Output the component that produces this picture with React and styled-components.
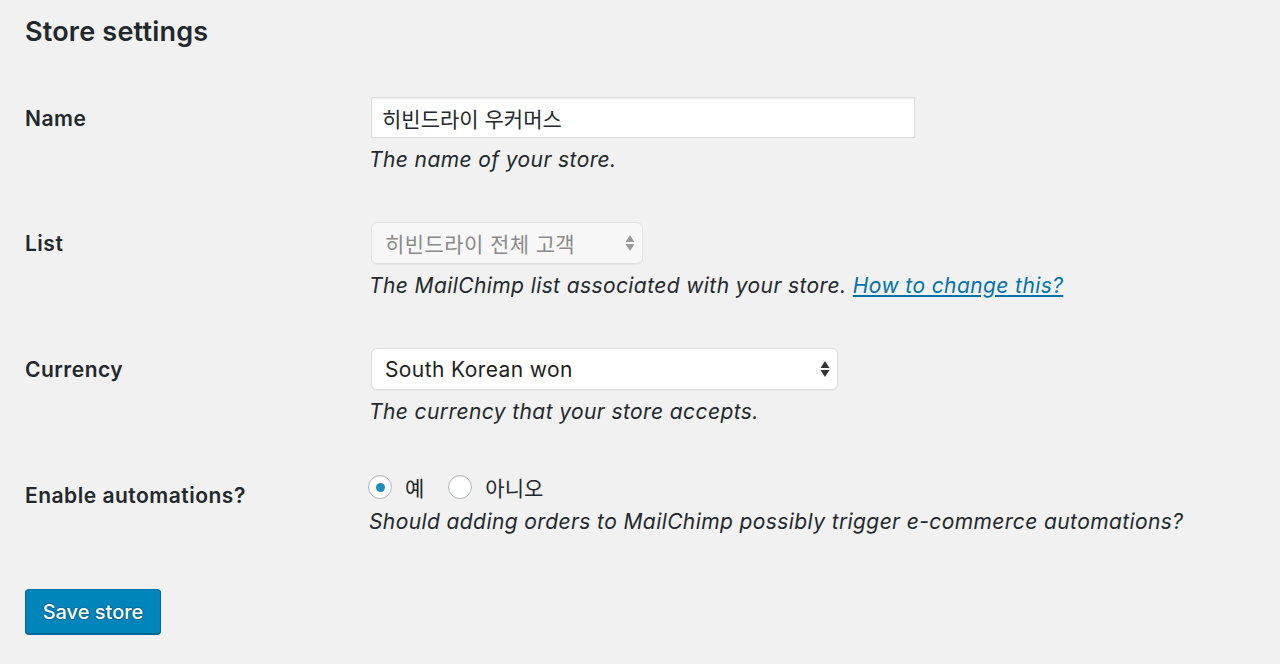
import React from "react";
import styled, { createGlobalStyle } from "styled-components";

const Global = createGlobalStyle`
  html, body { margin: 0; padding: 0; background: #f1f1f1; }
  body {
    font-family: Inter, "Noto Sans CJK KR", "Noto Sans", sans-serif;
    color: #23282d;
    font-size: 21px;
  }
`;

const Page = styled.div`
  padding: 0 25px;
  min-height: 664px;
  box-sizing: border-box;
`;

const Heading = styled.h2`
  margin: 0;
  padding-top: 15px;
  font-size: 27px;
  letter-spacing: 0.2px;
  line-height: 34px;
  font-weight: 600;
  color: #23282d;
`;

const Form = styled.div`
  margin-top: 26px;
`;

const Row = styled.div`
  display: grid;
  grid-template-columns: 346px 1fr;
  padding: 22px 0 25px;
`;

const Label = styled.div`
  padding-top: 9px;
  line-height: 26px;
  font-size: 21px;
  letter-spacing: 0.5px;
  font-weight: 600;
  color: #23282d;
`;

const Field = styled.div`
  display: flex;
  flex-direction: column;
  align-items: flex-start;
`;

const TextInput = styled.div`
  box-sizing: border-box;
  width: 544px;
  height: 41px;
  background: #fff;
  border: 1px solid #ddd;
  box-shadow: inset 0 1px 2px rgba(0, 0, 0, 0.07);
  padding: 0 10px;
  display: flex;
  align-items: center;
  font-size: 21px;
  color: #23282d;
`;

const Select = styled.div`
  box-sizing: border-box;
  width: ${(p) => p.$w}px;
  height: 42px;
  background: ${(p) => (p.$disabled ? "#f7f7f7" : "#fff")};
  border: 1px solid ${(p) => (p.$disabled ? "#e2e2e2" : "#dcdcdc")};
  border-radius: 6px;
  box-shadow: 0 1px 1px rgba(0, 0, 0, 0.04);
  padding: 0 7px 0 13px;
  display: flex;
  align-items: center;
  justify-content: space-between;
  font-size: 21px;
  letter-spacing: 0.4px;
  color: ${(p) => (p.$disabled ? "#8a8a8a" : "#1e1e1e")};
`;

const Arrows = ({ color }) => (
  <svg width="10" height="20" viewBox="0 0 10 20">
    <polygon points="5,2 9.5,9 0.5,9" fill={color} />
    <polygon points="5,18 9.5,11 0.5,11" fill={color} />
  </svg>
);

const Desc = styled.div`
  margin-top: 7px;
  margin-left: -2px;
  line-height: 30px;
  font-size: 21px;
  letter-spacing: 0.4px;
  font-style: italic;
  color: #23282d;
`;

const Link = styled.a`
  color: #0073aa;
  text-decoration: underline;
  cursor: pointer;
`;

const RadioGroup = styled.div`
  display: flex;
  align-items: center;
  height: 26px;
  margin-left: -3px;
`;

const RadioItem = styled.label`
  display: flex;
  align-items: center;
  gap: 13px;
  margin-right: 24px;
  font-size: 21px;
  color: #23282d;
`;

const RadioCircle = styled.span`
  box-sizing: border-box;
  width: 24px;
  height: 24px;
  border-radius: 50%;
  border: 1px solid #b4b9be;
  background: #fff;
  box-shadow: inset 0 1px 2px rgba(0, 0, 0, 0.1);
  display: flex;
  align-items: center;
  justify-content: center;
  &::after {
    content: "";
    display: ${(p) => (p.$checked ? "block" : "none")};
    width: 9px;
    height: 9px;
    border-radius: 50%;
    background: #1e8cbe;
  }
`;

const Button = styled.button`
  margin-top: 27px;
  box-sizing: border-box;
  width: 136px;
  height: 45px;
  background: #0085ba;
  border: 1px solid;
  border-color: #0073aa #006799 #006799;
  border-radius: 4px;
  box-shadow: 0 1px 0 #006799;
  color: #fff;
  font-family: Inter, "Noto Sans", sans-serif;
  font-size: 20px;
  font-weight: 500;
  text-shadow: 0 -1px 1px #006799, 1px 0 1px #006799, 0 1px 1px #006799,
    -1px 0 1px #006799;
  cursor: pointer;
  padding: 0;
`;

export default function App() {
  return (
    <>
      <Global />
      <Page>
        <Heading>Store settings</Heading>
        <Form>
          <Row>
            <Label>Name</Label>
            <Field>
              <TextInput>히빈드라이 우커머스</TextInput>
              <Desc>The name of your store.</Desc>
            </Field>
          </Row>
          <Row>
            <Label>List</Label>
            <Field>
              <Select $w={272} $disabled>
                <span>히빈드라이 전체 고객</span>
                <Arrows color="#9a9a9a" />
              </Select>
              <Desc>
                The MailChimp list associated with your store.{" "}
                <Link>How to change this?</Link>
              </Desc>
            </Field>
          </Row>
          <Row>
            <Label>Currency</Label>
            <Field>
              <Select $w={467}>
                <span>South Korean won</span>
                <Arrows color="#333" />
              </Select>
              <Desc>The currency that your store accepts.</Desc>
            </Field>
          </Row>
          <Row>
            <Label>Enable automations?</Label>
            <Field>
              <RadioGroup>
                <RadioItem>
                  <RadioCircle $checked />
                  예
                </RadioItem>
                <RadioItem>
                  <RadioCircle />
                  아니오
                </RadioItem>
              </RadioGroup>
              <Desc>
                Should adding orders to MailChimp possibly trigger e-commerce
                automations?
              </Desc>
            </Field>
          </Row>
        </Form>
        <Button>Save store</Button>
      </Page>
    </>
  );
}
